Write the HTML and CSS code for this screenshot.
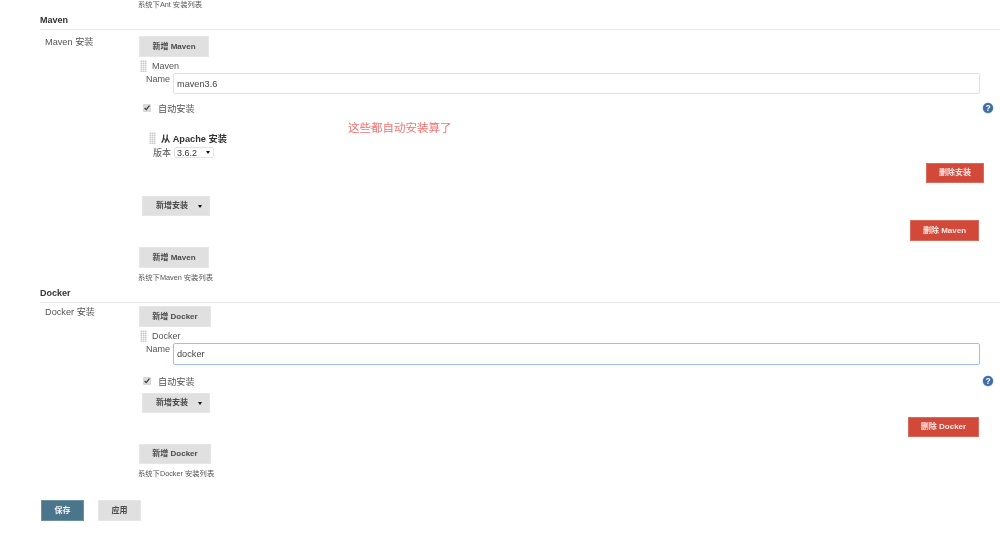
FILE: index.html
```html
<!DOCTYPE html>
<html lang="zh">
<head>
<meta charset="utf-8">
<title>全局工具配置</title>
<link rel="stylesheet" href="styles.css">
</head>
<body>
<main class="page">
  <p class="hint hint-top">系统下Ant 安装列表</p>

  <section>
    <h2 class="section-title">Maven</h2>
    <div class="row">
      <div class="row-label">Maven 安装</div>
      <div class="row-body">
        <button class="btn btn-wide-m first-btn" type="button">新增 Maven</button>
        <div class="drag-row"><span class="handle"></span><span>Maven</span></div>
        <div class="name-row"><label class="name-label">Name</label><input class="text-input" type="text" value="maven3.6"></div>
        <div class="check-row"><input class="check" type="checkbox" checked><span>自动安装</span><span class="help">?</span></div>
        <div class="drag-row inner-drag"><span class="handle"></span><strong>从 Apache 安装</strong></div>
        <div class="version-row"><span>版本</span><span class="select">3.6.2<i class="caret"></i></span></div>
        <div class="end"><button class="btn btn-red del-install" type="button">删除安装</button></div>
        <button class="btn btn-add-install add-install-m" type="button">新增安装<i class="caret"></i></button>
        <div class="end"><button class="btn btn-red del-tool del-maven" type="button">删除 Maven</button></div>
        <button class="btn btn-wide-m add-tool" type="button">新增 Maven</button>
        <p class="hint hint-row">系统下Maven 安装列表</p>
      </div>
    </div>
  </section>

  <section>
    <h2 class="section-title title-docker">Docker</h2>
    <div class="row">
      <div class="row-label label-docker">Docker 安装</div>
      <div class="row-body">
        <button class="btn btn-wide-d first-btn-d" type="button">新增 Docker</button>
        <div class="drag-row"><span class="handle"></span><span>Docker</span></div>
        <div class="name-row"><label class="name-label">Name</label><input class="text-input is-focused" type="text" value="docker"></div>
        <div class="check-row check-docker"><input class="check" type="checkbox" checked><span>自动安装</span><span class="help">?</span></div>
        <button class="btn btn-add-install add-install-d" type="button">新增安装<i class="caret"></i></button>
        <div class="end"><button class="btn btn-red del-tool del-docker" type="button">删除 Docker</button></div>
        <button class="btn btn-wide-d add-tool-d" type="button">新增 Docker</button>
        <p class="hint hint-row hint-docker">系统下Docker 安装列表</p>
      </div>
    </div>
  </section>

  <div class="actions">
    <button class="btn btn-save" type="button">保存</button>
    <button class="btn btn-apply" type="button">应用</button>
  </div>

  <p class="note">这些都自动安装算了</p>
</main>
</body>
</html>
```
FILE: styles.css
```css
* { box-sizing: border-box; }
html, body { margin: 0; height: 100%; background: #fff; }
body {
  font-family: "Liberation Sans", "Noto Sans CJK SC", sans-serif;
  font-size: 9px;
  color: #444;
  overflow: hidden;
}
.page {
  position: relative;
  height: 538px;
  padding-left: 40px;
  filter: blur(0.55px);
}
.hint { margin: 0; font-size: 7.3px; line-height: 9px; color: #555; }
.hint-top { margin-left: 98px; }
.hint-row { margin: 5px 0 0 -1px; }
.hint-docker { margin-top: 5px; }

.section-title {
  margin: 5px 0 0;
  padding-bottom: 4px;
  font-size: 9px;
  line-height: 12px;
  height: 16px;
  color: #333;
  border-bottom: 1px solid #e8e8e8;
}
.title-docker { margin-top: 5px; height: 16px; padding-bottom: 3px; }

.row { display: grid; grid-template-columns: 99px 1fr; }
.row-label { padding: 6px 0 0 5px; font-size: 9.2px; line-height: 12px; color: #555; }
.label-docker { padding-top: 3px; }
.row-body { display: flex; flex-direction: column; align-items: flex-start; padding-top: 6px; }
.row-body > div { width: 100%; }

.btn {
  display: block;
  height: 21px;
  padding: 0;
  border: 1px solid #e6e6e6;
  background: #e0e0e0;
  color: #4a4a4a;
  font: bold 8px/1 "Liberation Sans", "Noto Sans CJK SC", sans-serif;
  text-align: center;
}
.btn-wide-m { width: 70px; }
.btn-wide-d { width: 72px; }
.first-btn-d { margin-top: -3px; }
.add-tool { margin-top: 6px; }
.add-tool-d { margin-top: 7px; height: 20px; }

.drag-row { display: flex; align-items: center; gap: 5px; height: 12px; margin-top: 3px; padding-left: 1px; color: #555; }
.handle {
  width: 7px;
  height: 12px;
  background:
    repeating-linear-gradient(90deg, rgba(255,255,255,.55) 0 1px, transparent 1px 2px),
    repeating-linear-gradient(0deg, #c9c9c9 0 1px, #e6e6e6 1px 2px);
}
.inner-drag { margin: 19px 0 0 9px; width: auto !important; font-size: 9.2px; color: #333; }

.name-row { display: flex; align-items: flex-start; margin-top: 1px; padding-right: 20px; }
.name-label { width: 34px; padding-left: 7px; line-height: 12px; color: #555; }
.text-input {
  flex: 1;
  min-width: 0;
  height: 21px;
  padding: 0 3px;
  border: 1px solid #e0e0e0;
  border-radius: 2px;
  background: #fff;
  color: #444;
  font: 9.2px "Liberation Sans", sans-serif;
}
.is-focused { border-color: #9dbef5; height: 22px; }

.check-row { display: flex; align-items: center; height: 11px; margin-top: 8px; padding: 0 7px 0 4px; font-size: 9.2px; color: #555; }
.check-docker { margin-top: 10px; }
.check { width: 8px; height: 8px; margin: 0 7px 0 0; accent-color: #dcdcdc; }
.help {
  width: 10px;
  height: 10px;
  margin-left: auto;
  border-radius: 50%;
  background: #3f6ea6;
  box-shadow: 0 0 0 .5px #a9bdd6;
  color: #fff;
  font-size: 8.5px;
  font-weight: bold;
  line-height: 10px;
  text-align: center;
}

.version-row { display: flex; align-items: center; gap: 3px; height: 11px; margin-top: 3px; padding-left: 14px; color: #555; }
.select {
  display: flex;
  align-items: center;
  justify-content: space-between;
  width: 40px;
  height: 11px;
  padding: 0 3px 0 2px;
  border: 1px solid #e2e2e2;
  border-radius: 2px;
  color: #333;
}
.caret {
  width: 0;
  height: 0;
  border-left: 2.5px solid transparent;
  border-right: 2.5px solid transparent;
  border-top: 3.5px solid #111;
}
.end { display: flex; justify-content: flex-end; }
.btn-red { background: #d24939; border-color: #da6a5c; color: #fbe9e6; }
.del-install { width: 58px; height: 20px; margin: 5px 16px 0 0; }
.del-tool { margin: 4px 21px 0 0; }
.del-maven { width: 69px; }
.del-docker { width: 71px; height: 20px; }
.btn-add-install {
  display: flex;
  align-items: center;
  justify-content: space-between;
  width: 68px;
  height: 20px;
  padding: 0 7px 0 13px;
}
.add-install-m { margin: 13px 0 0 3px; }
.add-install-d { margin: 7px 0 0 3px; }

.actions { display: flex; gap: 14px; margin: 22px 0 0 1px; }
.actions .btn { width: 43px; height: 21px; }
.btn-save { background: #4b758b; border-color: #6d90a3; color: #f1f5f7; }
.btn-apply { border-color: #e6e6e6; }

.note {
  position: absolute;
  left: 348px;
  top: 121px;
  margin: 0;
  font-size: 11.5px;
  line-height: 15px;
  color: #f4716f;
}
```
